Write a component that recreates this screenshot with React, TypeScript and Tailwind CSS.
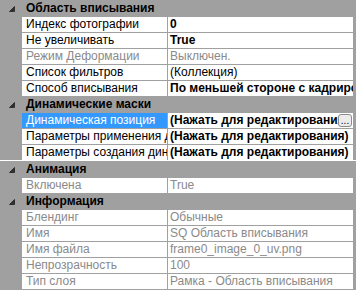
type Prop = {
  name: string;
  value: string;
  bold?: boolean;
  disabled?: boolean;
  selected?: boolean;
  button?: boolean;
};

type Category = {
  title: string;
  props: Prop[];
  underline?: boolean;
};

const categories: Category[] = [
  {
    title: "Область вписывания",
    props: [
      { name: "Индекс фотографии", value: "0", bold: true },
      { name: "Не увеличивать", value: "True", bold: true },
      { name: "Режим Деформации", value: "Выключен.", disabled: true },
      { name: "Список фильтров", value: "(Коллекция)" },
      { name: "Способ вписывания", value: "По меньшей стороне с кадрированием", bold: true },
    ],
  },
  {
    title: "Динамические маски",
    underline: true,
    props: [
      { name: "Динамическая позиция", value: "(Нажать для редактирования)", bold: true, selected: true, button: true },
      { name: "Параметры применения динамических масок", value: "(Нажать для редактирования)", bold: true },
      { name: "Параметры создания динамических масок", value: "(Нажать для редактирования)", bold: true },
    ],
  },
  {
    title: "Анимация",
    props: [{ name: "Включена", value: "True", disabled: true }],
  },
  {
    title: "Информация",
    props: [
      { name: "Блендинг", value: "Обычные", disabled: true },
      { name: "Имя", value: "SQ Область вписывания", disabled: true },
      { name: "Имя файла", value: "frame0_image_0_uv.png", disabled: true },
      { name: "Непрозрачность", value: "100", disabled: true },
      { name: "Тип слоя", value: "Рамка - Область вписывания", disabled: true },
    ],
  },
];

const Glyph = () => (
  <svg width="6" height="6" viewBox="0 0 6 6" className="ml-[9px] mt-[1px]">
    <polygon points="5.5,0.5 5.5,5.5 0.5,5.5" fill="#303030" stroke="#303030" strokeWidth="1" />
  </svg>
);

const Row = ({ p }: { p: Prop }) => (
  <div className="flex h-[15px] pl-[22px] pr-[3px] gap-px">
    <div
      className={`w-[145px] shrink-0 overflow-hidden whitespace-nowrap pl-[4px] ${
        p.selected ? "bg-[#3399ff] text-white" : p.disabled ? "bg-white text-[#8a8a8a]" : "bg-white text-black"
      }`}
    >
      {p.name}
    </div>
    <div className="relative flex-1 overflow-hidden whitespace-nowrap bg-white pl-[2px]">
      <span className={`${p.bold ? "font-bold" : ""} ${p.disabled ? "text-[#8a8a8a]" : "text-black"}`}>
        {p.value}
      </span>
      {p.button && (
        <div className="absolute right-px top-px flex h-[13px] w-[14px] items-end justify-center rounded-[3px] border border-[#8c8c8c] bg-[#ececec] pb-[1px] text-[10px] leading-[8px] text-black">
          ...
        </div>
      )}
    </div>
  </div>
);

export default function App() {
  return (
    <div
      className="flex h-[290px] w-[356px] flex-col gap-px overflow-hidden bg-[#a0a0a0] pt-px text-[12px] leading-[15px]"
      style={{ fontFamily: '"Liberation Sans", Arial, sans-serif' }}
    >
      {categories.map((c) => (
        <div key={c.title} className="flex flex-col gap-px">
          <div className="flex h-[15px] items-center">
            <Glyph />
            <span className="ml-[11px] font-bold text-black">{c.title}</span>
          </div>
          {c.props.map((p, i) => (
            <div key={p.name} className={c.underline && i === c.props.length - 1 ? "border-b border-white" : ""}>
              <Row p={p} />
            </div>
          ))}
        </div>
      ))}
    </div>
  );
}
